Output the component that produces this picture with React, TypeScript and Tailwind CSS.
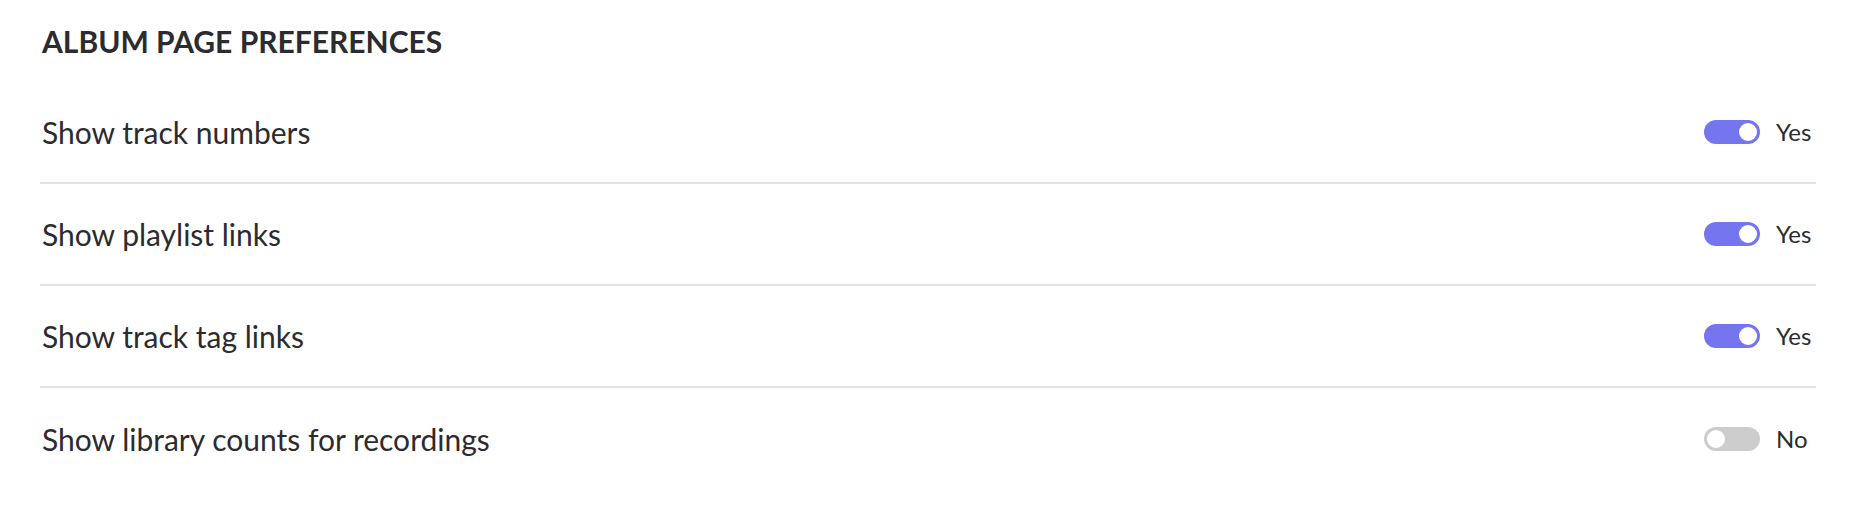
import { useState } from "react";

const PREFS = [
  { key: "trackNumbers", label: "Show track numbers", on: true },
  { key: "playlistLinks", label: "Show playlist links", on: true },
  { key: "tagLinks", label: "Show track tag links", on: true },
  { key: "libraryCounts", label: "Show library counts for recordings", on: false },
];

function Toggle({ on, onClick }: { on: boolean; onClick: () => void }) {
  return (
    <button
      type="button"
      onClick={onClick}
      className={`flex items-center w-[56px] h-[24px] rounded-full px-[3px] ${
        on ? "bg-[#7575f0] justify-end" : "bg-[#cdcdcd] justify-start"
      }`}
      aria-pressed={on}
    >
      <span className="block w-[18px] h-[18px] rounded-full bg-white" />
    </button>
  );
}

export default function App() {
  const [values, setValues] = useState<Record<string, boolean>>(
    Object.fromEntries(PREFS.map((p) => [p.key, p.on]))
  );

  return (
    <div
      className="w-[1856px] h-[528px] bg-white px-10 pt-6 text-[#2b2b30]"
      style={{ fontFamily: "Lato, 'Open Sans', sans-serif" }}
    >
      <h2 className="text-[30px] leading-[34px] font-bold pl-[2px]">
        ALBUM PAGE PREFERENCES
      </h2>
      <div className="mt-[24px]">
        {PREFS.map((p, i) => (
          <div
            key={p.key}
            className={`flex items-center justify-between h-[102px] ${
              i < PREFS.length - 1 ? "border-b-2 border-[#e3e3e3]" : ""
            }`}
          >
            <span className="text-[30px] pl-[2px]">{p.label}</span>
            <div className="flex items-center gap-4">
              <Toggle
                on={values[p.key]}
                onClick={() => setValues({ ...values, [p.key]: !values[p.key] })}
              />
              <span className="w-[40px] text-[24px]">{values[p.key] ? "Yes" : "No"}</span>
            </div>
          </div>
        ))}
      </div>
    </div>
  );
}
